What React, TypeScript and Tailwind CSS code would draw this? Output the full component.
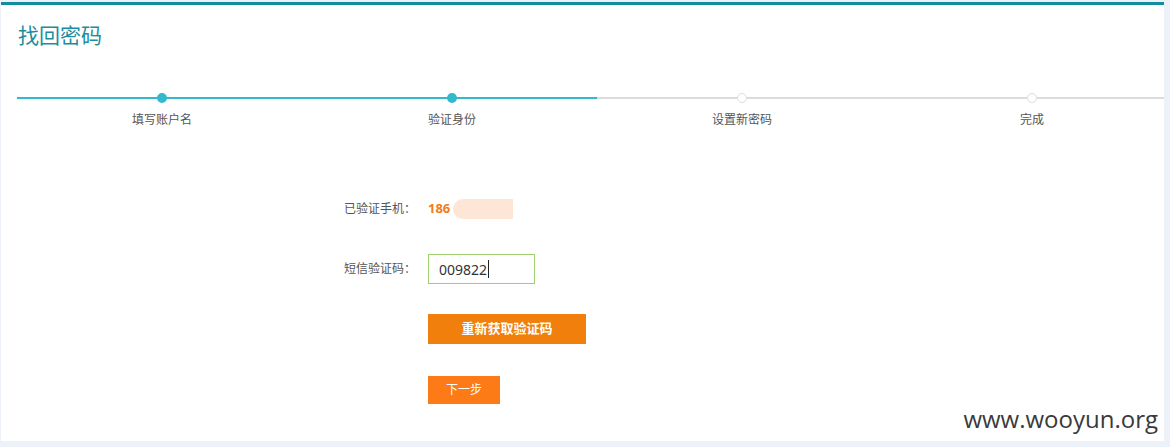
// 找回密码：步骤条 + 验证身份表单
const FONT = { fontFamily: '"Noto Sans", "Noto Sans CJK SC", sans-serif' };

const STEPS = [
  { label: '填写账户名', done: true },
  { label: '验证身份', done: true },
  { label: '设置新密码', done: false },
  { label: '完成', done: false },
];

function StepBar() {
  return (
    <div className="flex overflow-hidden pl-[16px]">
      {STEPS.map((s) => (
        <div key={s.label} className="relative w-[290px] shrink-0">
          <div className="flex h-[12px] items-center">
            <div className={s.done ? 'h-[2px] w-full bg-[#33b9cc]' : 'h-[2px] w-full bg-[#dcdcdc]'} />
          </div>
          {s.done ? (
            <div className="absolute left-[140px] top-[1px] h-[10px] w-[10px] rounded-full bg-[#33b9cc]" />
          ) : (
            <div className="absolute left-[140px] top-[1px] h-[10px] w-[10px] rounded-full border-[1.5px] border-[#dcdcdc] bg-white" />
          )}
          <div className="mt-[8px] text-center text-[12px] leading-[16px] text-[#555]">{s.label}</div>
        </div>
      ))}
    </div>
  );
}

export default function App() {
  return (
    <div className="h-[447px] w-[1170px] bg-[#edf1f8] pb-[6px] pl-[1px] pr-[6px] pt-[2px]" style={FONT}>
      <div className="relative flex h-full flex-col border-t-[3px] border-[#128d9e] bg-white">
        <h1 className="ml-[17px] mt-[16px] text-[21px] leading-[28px] text-[#1a8ea0]">找回密码</h1>

        <div className="mt-[43px]">
          <StepBar />
        </div>

        <div className="mt-[71px] flex flex-col">
          {/* 已验证手机 */}
          <div className="flex h-[20px] items-center">
            <div className="w-[415px] text-right text-[12px] text-[#555]">已验证手机：</div>
            <div className="ml-[12px] flex items-center">
              <span className="text-[13px] font-bold text-[#f47b20]">186</span>
              <span className="ml-[3px] h-[20px] w-[60px] rounded-l-full bg-[#fde6d6]" />
            </div>
          </div>

          {/* 短信验证码 */}
          <div className="mt-[35px] flex items-center">
            <div className="w-[415px] text-right text-[12px] text-[#555]">短信验证码：</div>
            <div className="ml-[12px] flex h-[30px] w-[107px] items-center border border-[#9fd06f] px-[10px] text-[14px] text-[#333]">
              009822<span className="ml-[1px] h-[18px] w-px bg-[#222]" />
            </div>
          </div>

          <div className="ml-[427px] mt-[30px]">
            <button className="h-[30px] w-[158px] bg-[#f07f0c] text-[13px] font-bold text-white">重新获取验证码</button>
          </div>

          <div className="ml-[427px] mt-[32px]">
            <button className="h-[28px] w-[72px] bg-[#fd7b16] text-[12px] text-white">下一步</button>
          </div>
        </div>

        <div className="absolute bottom-[8px] right-[6px] text-[24px] leading-[28px] text-[#3a3a3a]" style={{ fontFamily: '"Open Sans", sans-serif' }}>
          www.wooyun.org
        </div>
      </div>
    </div>
  );
}
